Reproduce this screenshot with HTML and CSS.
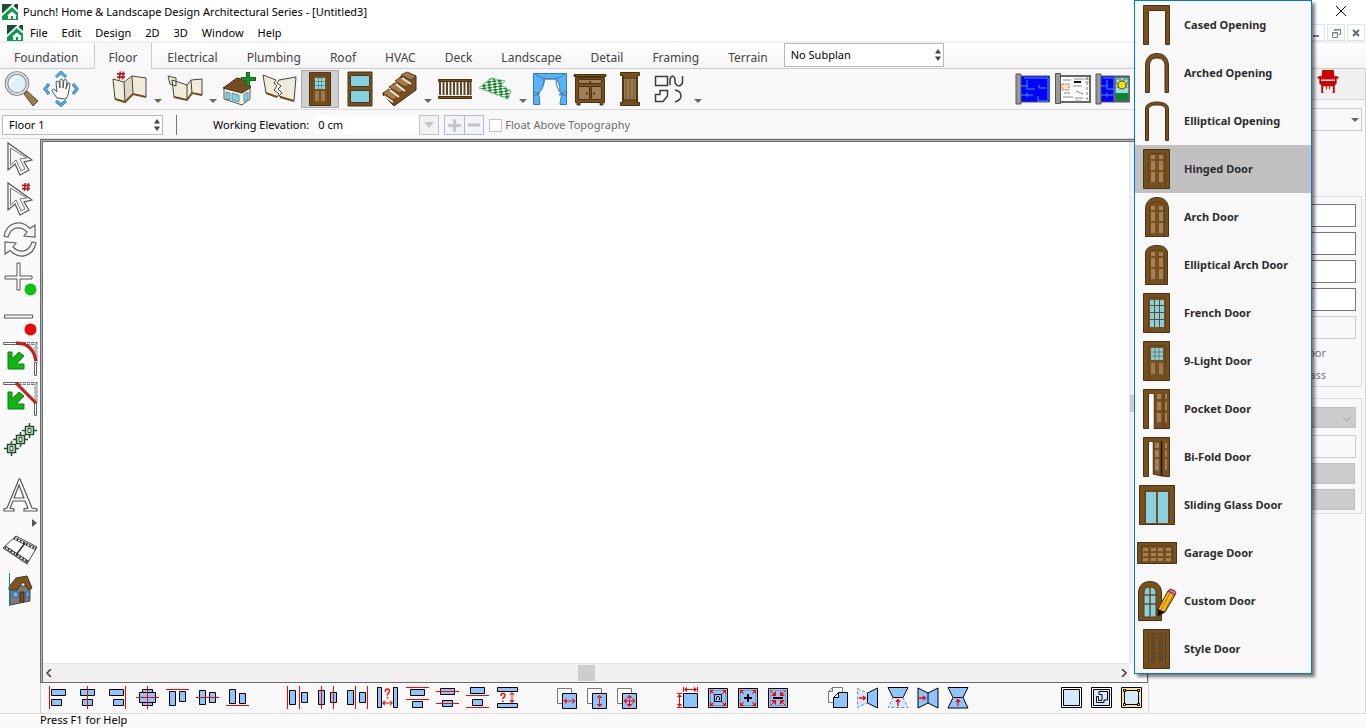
FILE: index.html
```html
<!DOCTYPE html>
<html lang="en">
<head>
<meta charset="utf-8">
<title>Punch! Home &amp; Landscape Design Architectural Series - [Untitled3]</title>
<link rel="stylesheet" href="styles.css">
</head>
<body>
<svg class="defs" width="0" height="0" aria-hidden="true">
  <defs>
    <symbol id="logo" viewBox="0 0 16 16"><path d="M0 0H16V16H0Z" fill="#0a9a4c"/><path d="M0 0H10L0 9Z" fill="#174f30"/><path d="M13 0H16V5L12 2Z" fill="#174f30"/><path d="M-1 12L13 -1M10 2L17 8.500" stroke="#fff" stroke-width="1.800"/><path d="M6 15V11.500H5L10 7.500L15 11.500H14V15H11V12H9V15Z" fill="#fff"/></symbol>
    <symbol id="updown" viewBox="0 0 8 14"><path d="M4 1L7 5.500H1ZM4 13L1 8.500H7Z" fill="#444"/></symbol>
    <symbol id="frame" viewBox="0 0 40 40"><path d="M6.500 .5H32.500V39.500H6.500Z" fill="#76501f" stroke="#4a3214"/><path d="M11.500 39V4.500H28.500V39" fill="none" stroke="#5e4019"/></symbol>
    <symbol id="archframe" viewBox="0 0 40 40"><path d="M8.500 39.500V12C8.500 5 13 .5 20 .5S31.500 5 31.500 12V39.500Z" fill="#76501f" stroke="#4a3214"/><path d="M12.500 39V12C12.500 7 16 4.500 20 4.500S27.500 7 27.500 12V39" fill="none" stroke="#5e4019"/></symbol>
    <symbol id="panels" viewBox="0 0 40 40"><path d="M14 6h4v4h-4ZM22 6h4v4h-4ZM14 12h4v9h-4ZM22 12h4v9h-4ZM14 23h4v10h-4ZM22 23h4v10h-4Z"/></symbol>
    <symbol id="ninelight" viewBox="0 0 40 40"><path d="M14 7H26V19H14Z" fill="#85d1df"/><path d="M18 7V19M22 7V19M14 11H26M14 15H26" stroke="#7a6a4a" stroke-width=".8"/><path d="M14 22h4v11h-4ZM22 22h4v11h-4Z" fill="#9c7a50"/></symbol>
    <symbol id="cursor" viewBox="0 0 40 40"><path d="M8 4V31L15 25L20 36L29 31L24 23L32 21Z" fill="#fff" stroke="#555" stroke-width="1.200"/><path d="M10.500 9V26L16 21L21 32L25 30L20 20L27 19Z" fill="#f4f4f4" stroke="#777"/></symbol>
    <symbol id="trim" viewBox="0 0 40 40"><path d="M3.500 3.500H18.500V5.500H3.500ZM34.500 23.500H36.500V36.500H34.500Z" fill="#fff" stroke="#666"/><path d="M19 4.500H36V24" fill="none" stroke="#777" stroke-width="3" stroke-dasharray="3 1"/><path d="M19.500 4.500H36V24" fill="none" stroke="#fff" stroke-dasharray="2 2"/><path d="M8 13H12V20L19 13L24 17L16 25H24V30H8Z" fill="#10b512" stroke="#07830c"/></symbol>
    <symbol id="hash" viewBox="0 0 10 10"><path d="M4 0L3 10M8 0L7 10M0 3H10M0 7H10" stroke="#b42020" stroke-width="2"/></symbol>
    <symbol id="more" viewBox="0 0 8 5"><path d="M0 0H8L4 4Z" fill="#666"/></symbol>
    <symbol id="harrow" viewBox="0 0 12 6"><path d="M0 3L3 0V6ZM12 3L9 0V6ZM2 2.500H10V3.500H2Z" fill="#f00"/></symbol>
    <symbol id="varrow" viewBox="0 0 6 12"><path d="M3 0L0 3H6ZM3 12L0 9H6ZM2.500 2H3.500V10H2.500Z" fill="#f00"/></symbol>
    <symbol id="copyback" viewBox="0 0 24 24"><path d="M1.500 2.500H15.500V17.500H1.500Z" fill="#fff" stroke="#777"/><path d="M6.500 7.500H20.500V22.500H6.500Z" fill="#8fc5ff" stroke="#000"/></symbol>
    <symbol id="square" viewBox="0 0 24 24"><path d="M2.500 2.500H21.500V21.500H2.500Z" fill="#8fc5ff" stroke="#000"/><path d="M4.500 4.500H19.500V19.500H4.500Z" fill="none" stroke="#777" stroke-dasharray="1 1"/></symbol>
    <symbol id="corners" viewBox="0 0 24 24"><path d="M4 4H8L4 8ZM20 4V8L16 4ZM4 20V16L8 20ZM20 20H16L20 16Z" fill="#f00"/><path d="M5 5L8 8M19 5L16 8M5 19L8 16M19 19L16 16" stroke="#f00"/></symbol>
  </defs>
</svg>

<header class="titlebar">
  <svg class="logo"><use href="#logo"/></svg>
  <h1 class="title">Punch! Home &amp; Landscape Design Architectural Series - [Untitled3]</h1>
  <button class="close" aria-label="Close"><svg width="12" height="12" viewBox="0 0 12 12"><path d="M1 1L11 11M11 1L1 11" stroke="#000"/></svg></button>
</header>

<div class="menubar">
  <svg class="logo"><use href="#logo"/></svg>
  <nav class="menus">
    <button>File</button><button>Edit</button><button>Design</button><button>2D</button><button>3D</button><button>Window</button><button>Help</button>
  </nav>
  <div class="mdi">
    <button aria-label="Minimize"><svg viewBox="0 0 12 12"><path d="M3 9H9" stroke="#74818f" stroke-width="2"/></svg></button>
    <button aria-label="Restore"><svg viewBox="0 0 12 12"><path d="M4.500 4V2.500H10.500V7.500H9M2.500 5.500H7.500V10.500H2.500ZM2 6H8M4 3H11" fill="none" stroke="#74818f"/></svg></button>
    <button aria-label="Close drawing"><svg viewBox="0 0 12 12"><path d="M3 3L9 9M9 3L3 9" stroke="#5f6d7b" stroke-width="2"/></svg></button>
  </div>
</div>

<div class="tabbar">
  <div class="tabs" role="tablist">
    <button role="tab">Foundation</button><button role="tab" class="active" aria-selected="true">Floor</button><button role="tab">Electrical</button><button role="tab">Plumbing</button><button role="tab">Roof</button><button role="tab">HVAC</button><button role="tab">Deck</button><button role="tab">Landscape</button><button role="tab">Detail</button><button role="tab">Framing</button><button role="tab">Terrain</button>
  </div>
  <span class="pick subplan"><select aria-label="Subplan"><option>No Subplan</option></select><svg><use href="#updown"/></svg></span>
</div>

<div class="workspace">
  <div class="main">
    <div class="toolbar">
      <div class="group">
        <button class="tool" aria-label="Zoom"><svg viewBox="0 0 36 36"><path d="M21 23L24 20L35 30L30 35Z" fill="#9b7b52" stroke="#5c4a33"/><circle cx="14" cy="12.500" r="10.500" fill="#dfeffb" stroke="#777" stroke-width="3.500"/><circle cx="14" cy="12.500" r="10.500" fill="none" stroke="#ddd" stroke-width="1.800"/><path d="M7 14Q8 6 16 6" fill="none" stroke="#fff" stroke-width="2"/></svg></button>
        <button class="tool" aria-label="Pan"><svg viewBox="0 0 36 36"><path d="M13 6L18 1.500L23 6M13 30L18 34L23 30M6 13L2 18L6 23M30 13L34 18L30 23" fill="none" stroke="#246ba8" stroke-width="3"/><path d="M13 6L18 1.500L23 6M13 30L18 34L23 30M6 13L2 18L6 23M30 13L34 18L30 23" fill="none" stroke="#55adf2" stroke-width="1.800"/><path d="M14 27L9 20Q9 17 12 19L14 21L13 11Q14 9 16 11L17 17V9Q18 7 20 9V17L21 9Q23 7 24 10L23 18L25 12Q27 11 27 14L25 24L23 28Z" fill="#fff" stroke="#555"/></svg></button>
      </div>
      <div class="group">
        <button class="tool" aria-label="Wall"><svg viewBox="0 0 36 36"><path d="M1 8L12 11L20 5L34 7V26L21 23L13 31L3 28Z" fill="#f0ecdc" stroke="#48443c"/><path d="M13 11L20 6V23L13 30Z" fill="#dcd7c6"/><path d="M12 11L13 31M20 5L21 23" stroke="#48443c"/><path d="M3 28L13 31L21 23L34 26" fill="none" stroke="#77501f" stroke-width="2"/><use href="#hash" x="5" y="0" width="8" height="9"/></svg></button>
        <button class="drop" aria-label="Wall options"><svg><use href="#more"/></svg></button>
        <button class="tool" aria-label="Connected walls"><svg viewBox="0 0 36 36"><path d="M1 5L9 7V15L3 13ZM5 9L20 14L24 9L35 8V24L25 22L20 29L7 26Z" fill="#f0ecdc" stroke="#48443c"/><path d="M20 14V28M24 9L25 23" stroke="#48443c"/><path d="M7 26L20 29L25 22L35 24" fill="none" stroke="#77501f" stroke-width="2"/></svg></button>
        <button class="drop" aria-label="Connected wall options"><svg><use href="#more"/></svg></button>
        <button class="tool" aria-label="Room addition"><svg viewBox="0 0 36 36"><path d="M2 17L20 21L28 17V28L20 34L2 28Z" fill="#f5f0df" stroke="#59544a"/><path d="M1 17L15 7L24 9L29 16L20 22Z" fill="#784c21" stroke="#44311c"/><path d="M4 21L8 22V29L4 28ZM10 22L17 24V31L10 29ZM22 23L26 21V28L22 31Z" fill="#7ed1e2" stroke="#5a98a5"/><path d="M26 1V15M19 8H34" stroke="#0f6e1b" stroke-width="4"/><path d="M26 2V14M20 8H33" stroke="#19912a" stroke-width="2"/></svg></button>
        <button class="tool" aria-label="Break wall"><svg viewBox="0 0 36 36"><path d="M1 4L14 9L12 12L15 15L12 19L17 23L15 26L4 22Z" fill="#f0ecdc" stroke="#48443c"/><path d="M17 9L34 6L32 30L17 25L20 22L16 18L19 15L15 12Z" fill="#f0ecdc" stroke="#48443c"/><path d="M4 22L15 26M18 26L32 30" stroke="#77501f" stroke-width="2"/></svg></button>
        <button class="tool selected" aria-label="Door"><svg viewBox="0 0 36 36"><path d="M7.500 1.500H28.500V34.500H7.500Z" fill="#76501f" stroke="#4a3214"/><path d="M10 34V4H26V34" fill="none" stroke="#553a17"/><path d="M13 7H23V18H13Z" fill="#85e0ee"/><path d="M16.500 7V18M19.500 7V18M13 10.500H23M13 14.500H23" stroke="#5d7a66" stroke-width=".8"/><path d="M13 20h4v10h-4ZM19 20h4v10h-4Z" fill="#9c7a50"/></svg></button>
        <button class="tool" aria-label="Window"><svg viewBox="0 0 36 36"><path d="M6 1H30V35H6Z" fill="#76501f" stroke="#4a3214"/><path d="M8.500 4.500H27.500V15.500H8.500ZM8.500 19.500H27.500V31.500H8.500Z" fill="#82d2e1" stroke="#4a3214"/></svg></button>
        <button class="tool" aria-label="Stairs"><svg viewBox="0 0 36 36"><path d="M1 24L12 35L34 19V5L26 2L18 6V11L11 13V18L1 22Z" fill="#7a4e1f" stroke="#41301d"/><path d="M1 22L7 18L17 25L11 29ZM7 16L13 12L23 19L17 22ZM13 10L19 6L29 12L23 16ZM19 4L25 1L34 5L29 9Z" fill="#a57c4c" stroke="#59401f"/><path d="M2 25L11 31M8 19L17 26M14 13L23 20M20 7L29 13" fill="none" stroke="#eee6d8" stroke-width="2"/></svg></button>
        <button class="drop" aria-label="Stair options"><svg><use href="#more"/></svg></button>
        <button class="tool" aria-label="Railing"><svg viewBox="0 0 36 36"><path d="M3 11V24M6.500 11V24M10 11V24M13.500 11V24M17 11V24M20.500 11V24M24 11V24M27.500 11V24M31 11V24M33.500 11V24" stroke="#5e4524" stroke-width="2"/><path d="M1.500 8.500H34.500V10.500H1.500ZM1.500 25.500H34.500V27.500H1.500Z" fill="#76501f" stroke="#4a3214"/></svg></button>
        <button class="tool" aria-label="Flooring"><svg viewBox="0 0 36 36"><defs><pattern id="check" width="6" height="5" patternUnits="userSpaceOnUse" patternTransform="rotate(20) skewX(-35)"><path d="M0 0H6V5H0Z" fill="#fff"/><path d="M0 0H3.200V2.700H0ZM3 2.500H6.200V5.200H3Z" fill="#0b8526"/></pattern></defs><path d="M14 7L28 10L24 14L34 20L31 28L2 17Z" fill="url(#check)" stroke="#3e9450" stroke-width=".6"/></svg></button>
        <button class="drop" aria-label="Flooring options"><svg><use href="#more"/></svg></button>
        <button class="tool" aria-label="Curtains"><svg viewBox="0 0 36 36"><path d="M1.500 2.500H34.500V33.500H28Q28 27 30 24H27Q30 15 24 8H12Q16 16 9 22H6Q8 26 8 33.500H1.500Z" fill="#57b3fc" stroke="#3d78aa"/><path d="M13 9H23Q24 17 28 21L27 24Q29 27 28 31H8Q8 27 9 24L8 21Q12 17 13 9Z" fill="#f8f8f8"/><path d="M12 8Q12 18 6 22M24 8Q24 18 30 23M3 3Q9 8 18 8T33 3M1 20L7 23L1 25M35 20L29 23L35 25" fill="none" stroke="#3d78aa"/></svg></button>
        <button class="tool" aria-label="Cabinet"><svg viewBox="0 0 36 36"><path d="M3.500 6.500H32.500V31.500H31V34H28V31.500H8V34H5V31.500H3.500Z" fill="#76501f" stroke="#4a3214"/><path d="M2 3.500H34V5.500H2Z" fill="#76501f" stroke="#4a3214"/><path d="M6.500 8.500H29.500V12.500H6.500ZM6.500 15.500H17.500V28.500H6.500ZM19.500 15.500H29.500V28.500H19.500Z" fill="#a17e53" stroke="#4a3214"/><path d="M18 10V11.500M15 21.500V23.500M22 21.500V23.500" stroke="#291d0e" stroke-width="1.500"/></svg></button>
        <button class="tool" aria-label="Column"><svg viewBox="0 0 36 36"><path d="M11 5H25V32H11Z" fill="#9c7a50" stroke="#4a3214" stroke-width="2"/><path d="M14 6V31M18 6V31M22 6V31" stroke="#755229"/><path d="M8.500 1.500H27.500V4.500H25.500V7H11V4.500H8.500ZM8.500 34.500V31.500H11V29H25V31.500H27.500V34.500Z" fill="#76501f" stroke="#4a3214"/></svg></button>
        <button class="tool" aria-label="Shapes"><svg viewBox="0 0 36 36"><path d="M3.500 5.500H15.500V14.500H3.500ZM18 14V8Q20.500 2 23 8V12Q27 18 30.500 12V5M8 19.500H15.500V25L11 30.500H3.500V23.500H8ZM23 19Q29 20 29 25Q29 29 23 31" fill="none" stroke="#3e3e3e" stroke-width="1.500"/></svg></button>
        <button class="drop" aria-label="Shape options"><svg><use href="#more"/></svg></button>
      </div>
      <div class="group plans">
        <button class="tool" aria-label="Plan view"><svg viewBox="0 0 36 36"><path d="M5 5H34.500V31H5Z" fill="#00f" stroke="#557"/><path d="M1 3H6V33H1Z" fill="#999" stroke="#555"/><path d="M12 9V18H20M6 15H12M24 17H31M24 14V17M23 25V30H33V7H9M6 24H18M12 22V26" fill="none" stroke="#41a0f7"/></svg></button>
        <button class="tool" aria-label="Layout sheet"><svg viewBox="0 0 36 36"><path d="M5 5H35V31H5Z" fill="#fff" stroke="#666" stroke-width="2"/><path d="M0.500 2.500H5.500V32.500H0.500Z" fill="#999" stroke="#555"/><path d="M7 13H14V19H7Z" fill="#f9e2c8" stroke="#9c7b58" stroke-dasharray="2 1"/><path d="M19 11H26" stroke="#111" stroke-width="2"/><path d="M8 9H16M18 15H27M19 8H29M9 22H15M21 20L28 23M8 26H18M20 27H28M20 30H26M30 8H34M30 11H34" stroke="#888"/><path d="M32 6V30" stroke="#777" stroke-dasharray="3 2"/></svg></button>
        <button class="tool" aria-label="Split view"><svg viewBox="0 0 36 36"><path d="M5 5H34.500V31H5Z" fill="#00f" stroke="#557"/><path d="M1 3H6V33H1Z" fill="#999" stroke="#555"/><path d="M12 9V18H19M6 15H12M6 24H18M12 22V26M8 7H19V30" fill="none" stroke="#41a0f7"/><path d="M20 6H34V30H20Z" fill="#42b2ff"/><path d="M20 17H34V24H20Z" fill="#94d9f2"/><path d="M20 22H34V30H20Z" fill="#0b872b"/><circle cx="27" cy="14" r="4" fill="#ffe000" stroke="#765c00"/><path d="M27 7V9M22 9L24 11M32 9L30 11M20 15H22M32 15H34" stroke="#fd0" stroke-width="2"/><path d="M20 6H34V30H20Z" fill="none" stroke="#666" stroke-width="1.500"/></svg></button>
      </div>
    </div>

    <div class="options">
      <span class="pick floor"><select aria-label="Floor"><option>Floor 1</option></select><svg><use href="#updown"/></svg></span>
      <span class="rule"></span>
      <label for="elevation">Working Elevation:</label>
      <input id="elevation" class="elevation" value="0 cm">
      <button class="dim" aria-label="Elevation list"><svg viewBox="0 0 18 18"><path d="M4 6H14L9 12Z" fill="#c4c4c4"/></svg></button>
      <div class="steps">
        <button aria-label="Raise"><svg viewBox="0 0 18 18"><path d="M9 3V15M3 9H15" stroke="#c4c4c4" stroke-width="3"/></svg></button>
        <button aria-label="Lower"><svg viewBox="0 0 18 18"><path d="M3 9H15" stroke="#c4c4c4" stroke-width="3"/></svg></button>
      </div>
      <input type="checkbox" id="float"><label for="float" class="muted">Float Above Topography</label>
    </div>

    <div class="body">
      <div class="palette">
        <button aria-label="Select"><svg viewBox="0 0 40 40"><use href="#cursor"/></svg></button>
        <button aria-label="Select by number"><svg viewBox="0 0 40 40"><use href="#cursor"/><use href="#hash" x="22" y="4" width="8" height="8"/></svg></button>
        <button aria-label="Rotate"><svg viewBox="0 0 40 40"><path id="turn" d="M4 17C7 3 21 0 30 9.500L35 6V18L24 17L27 13C20 6 11 8 8 18Z" fill="#f6f6f6" stroke="#666" stroke-width="1.200"/><use href="#turn" transform="rotate(180 20 20.500)"/></svg></button>
        <button aria-label="Add point"><svg viewBox="0 0 40 40"><path d="M17 4H20V17H32V20H20V31H17V20H5V17H17Z" fill="#fff" stroke="#555"/><circle cx="30.500" cy="30.500" r="6" fill="#0ac30d"/></svg></button>
        <button aria-label="Remove point"><svg viewBox="0 0 40 40"><path d="M4.500 16H32.500V19H4.500Z" fill="#fff" stroke="#555"/><circle cx="30.500" cy="30.500" r="6" fill="#e80b0b"/></svg></button>
        <button aria-label="Fillet"><svg viewBox="0 0 40 40"><use href="#trim"/><path d="M16 4Q33 4 36 22" fill="none" stroke="#9a1111" stroke-width="3"/><path d="M16 4Q33 4 36 22" fill="none" stroke="#f01a1a" stroke-width="1.500"/></svg></button>
        <button aria-label="Chamfer"><svg viewBox="0 0 40 40"><use href="#trim"/><path d="M16 4L36 24" stroke="#9a1111" stroke-width="3"/><path d="M16 4L36 24" stroke="#f01a1a" stroke-width="1.500"/></svg></button>
        <button aria-label="Multiple copy"><svg viewBox="0 0 40 40"><g fill="none" stroke="#214e2c"><g id="node"><path d="M25.500 7.500H33.500V15.500H25.500Z" fill="#e6eee4" stroke-width="1.500"/><path d="M28 9.500H31V13.500H28Z" fill="#fff"/><path d="M29.500 4V8M29.500 15V19M22 11.500H26M33 11.500H37" stroke-width="1.500"/></g><use href="#node" x="-9" y="9"/><use href="#node" x="-18" y="18"/></g></svg></button>
        <button class="text" aria-label="Text"><svg viewBox="0 0 40 40"><path d="M20 4L32 33L37 34V36H24V34L28 33L25 26H13L10 33L14 34V36H4V34L7 33L19 4ZM14 23H24L19 10Z" fill="#fff" fill-rule="evenodd" stroke="#555" stroke-width="1.200"/></svg></button>
        <button class="side" aria-label="More text tools"><svg viewBox="0 0 5 8"><path d="M0 0V8L5 4Z" fill="#555"/></svg></button>
        <button aria-label="Animation"><svg viewBox="0 0 40 40"><path d="M16 6L37 17L27 34L3 18Z" fill="#fff" stroke="#444"/><path d="M14 8L36 19M5 17L28 32" stroke="#333" stroke-width="3"/><path d="M15 8.500L35 18.500M6 18L27 31.500" stroke="#fff" stroke-width="1.500" stroke-dasharray="2 1.500"/><path d="M25 13L16 25" stroke="#333" stroke-width="1.500"/></svg></button>
        <button aria-label="House elevation"><svg viewBox="0 0 40 40"><path d="M10 16H30V31L10 35Z" fill="#7a7a7a" stroke="#444"/><path d="M9 17L16 8L27 6L32 18L29 20L23 12L17 20H9Z" fill="#815321" stroke="#493018"/><path d="M13 22H18V27H13ZM26 22H29V27H26Z" fill="#66baff" stroke="#29699d"/><path d="M20 22H24V32H20Z" fill="#7b4a1c" stroke="#452b13"/><path d="M9.500 3V36" stroke="#1778cc"/></svg></button>
      </div>

      <div class="center">
        <div class="viewport">
          <div class="sheet"></div>
          <div class="vscroll"><span class="vthumb"></span></div>
          <div class="hscroll">
            <button aria-label="Scroll left"><svg viewBox="0 0 8 8"><path d="M6 0L2 4L6 8" fill="none" stroke="#444" stroke-width="1.600"/></svg></button>
            <span class="hthumb"></span>
            <button aria-label="Scroll right"><svg viewBox="0 0 8 8"><path d="M2 0L6 4L2 8" fill="none" stroke="#444" stroke-width="1.600"/></svg></button>
          </div>
        </div>
        <div class="arrange">
          <div class="set">
            <button aria-label="Align left"><svg viewBox="0 0 24 24"><path class="b" d="M5.500 3.500h14v6h-14ZM5.500 13.500h10v6h-10Z"/><path class="r" d="M3.500 0V23"/></svg></button>
            <button aria-label="Align centers"><svg viewBox="0 0 24 24"><path class="b" d="M4.500 3.500h14v6h-14ZM6.500 13.500h10v6h-10Z"/><path class="r" d="M11.500 0V23"/></svg></button>
            <button aria-label="Align right"><svg viewBox="0 0 24 24"><path class="b" d="M3.500 3.500h14v6h-14ZM7.500 13.500h10v6h-10Z"/><path class="r" d="M19.500 0V23"/></svg></button>
            <button aria-label="Center both"><svg viewBox="0 0 24 24"><path class="b" d="M6.500 3.500h10v16h-10Z"/><path class="b" d="M3.500 6.500h16v10h-16Z"/><path class="r" d="M11.500 0V23M0 11.500H23"/></svg></button>
            <button aria-label="Align tops"><svg viewBox="0 0 24 24"><path class="b" d="M3.500 5.500h6v14h-6ZM13.500 5.500h6v10h-6Z"/><path class="r" d="M0 3.500H23"/></svg></button>
            <button aria-label="Align middles"><svg viewBox="0 0 24 24"><path class="b" d="M3.500 4.500h6v14h-6ZM13.500 6.500h6v10h-6Z"/><path class="r" d="M0 11.500H23"/></svg></button>
            <button aria-label="Align bottoms"><svg viewBox="0 0 24 24"><path class="b" d="M3.500 3.500h6v14h-6ZM13.500 7.500h6v10h-6Z"/><path class="r" d="M0 19.500H23"/></svg></button>
          </div>
          <div class="set">
            <button aria-label="Distribute left edges"><svg viewBox="0 0 24 24"><path class="b" d="M3.500 4.500h6v14h-6ZM15.500 6.500h6v10h-6Z"/><path class="r" d="M1.500 0V23M13.500 0V23"/></svg></button>
            <button aria-label="Distribute centers"><svg viewBox="0 0 24 24"><path class="b" d="M2.500 4.500h6v14h-6ZM14.500 6.500h6v10h-6Z"/><path class="r" d="M5.500 0V23M17.500 0V23"/></svg></button>
            <button aria-label="Distribute right edges"><svg viewBox="0 0 24 24"><path class="b" d="M1.500 4.500h6v14h-6ZM13.500 6.500h6v10h-6Z"/><path class="r" d="M9.500 0V23M21.500 0V23"/></svg></button>
            <button aria-label="Space horizontally"><svg viewBox="0 0 24 24"><path class="b" d="M1.500 1.500h4v20h-4ZM17.500 1.500h4v20h-4Z"/><path class="q" d="M9.500 6V4.500Q9.500 3 11.500 3T13.500 5Q13.500 6.500 11.500 8V9.500M11.500 11V12.500"/><use href="#harrow" x="6" y="14" width="11" height="6"/></svg></button>
            <button aria-label="Distribute top edges"><svg viewBox="0 0 24 24"><path class="b" d="M4.500 3.500h14v6h-14ZM6.500 15.500h10v6h-10Z"/><path class="r" d="M0 1.500H23M0 13.500H23"/></svg></button>
            <button aria-label="Distribute middles"><svg viewBox="0 0 24 24"><path class="b" d="M4.500 2.500h14v6h-14ZM6.500 14.500h10v6h-10Z"/><path class="r" d="M0 5.500H23M0 17.500H23"/></svg></button>
            <button aria-label="Distribute bottom edges"><svg viewBox="0 0 24 24"><path class="b" d="M4.500 1.500h14v6h-14ZM6.500 13.500h10v6h-10Z"/><path class="r" d="M0 9.500H23M0 21.500H23"/></svg></button>
            <button aria-label="Space vertically"><svg viewBox="0 0 24 24"><path class="b" d="M1.500 1.500h20v4h-20ZM1.500 17.500h20v4h-20Z"/><path class="q" d="M5 10V9Q5 7.500 7 7.500T9 9.500Q9 11 7 12V13M7 14.500V16"/><use href="#varrow" x="13" y="6" width="6" height="11"/></svg></button>
          </div>
          <div class="set">
            <button aria-label="Match width"><svg viewBox="0 0 24 24"><use href="#copyback"/><use href="#harrow" x="7.500" y="12" width="12" height="6"/></svg></button>
            <button aria-label="Match height"><svg viewBox="0 0 24 24"><use href="#copyback"/><use href="#varrow" x="10.500" y="8" width="6" height="14"/></svg></button>
            <button aria-label="Match size"><svg viewBox="0 0 24 24"><use href="#copyback"/><use href="#harrow" x="7.500" y="12" width="12" height="6"/><use href="#varrow" x="10.500" y="9" width="6" height="12"/></svg></button>
          </div>
          <div class="set">
            <button aria-label="Dimensions"><svg viewBox="0 0 24 24"><path class="b" d="M7.500 7.500h14v14h-14Z"/><path class="r" d="M9 3.500H20M7.500 1V6M21.500 1V6M3.500 9V20M1 7.500H6M1 21.500H6"/><path d="M8 3.500L11 1V6ZM21 3.500L18 1V6ZM3.500 8L1 11H6ZM3.500 21L1 18H6Z" fill="#f00"/></svg></button>
            <button aria-label="Scale"><svg viewBox="0 0 24 24"><use href="#square"/><use href="#corners"/><path d="M8.500 8.500h7v7h-7ZM10.500 14V11.500L12 10L13.500 11.500V14" fill="#8fc5ff" stroke="#000"/></svg></button>
            <button aria-label="Enlarge"><svg viewBox="0 0 24 24"><use href="#square"/><use href="#corners"/><path d="M12 8V16M8 12H16" stroke="#000" stroke-width="2"/></svg></button>
            <button aria-label="Reduce"><svg viewBox="0 0 24 24"><use href="#square"/><path d="M10 10V5L5 10ZM14 10V5L19 10ZM10 14V19L5 14ZM14 14V19L19 14Z" fill="#f00"/><path d="M4 4L9 9M20 4L15 9M4 20L9 15M20 20L15 15" stroke="#f00"/><path d="M7 12H17" stroke="#000" stroke-width="2"/></svg></button>
          </div>
          <div class="set">
            <button aria-label="Duplicate"><svg viewBox="0 0 24 24"><path d="M6.500 1.500H16.500V16.500H2.500V5.500ZM2.500 5.500H6.500V1.500" fill="#fff" stroke="#777"/><path class="b" d="M12.500 6.500H21.500V21.500H7.500V11.500ZM7.500 11.500H12.500V6.500"/></svg></button>
            <button aria-label="Mirror copy horizontally"><svg viewBox="0 0 24 24"><path class="ghost" d="M1.500 2.500L11.500 7V17L1.500 21.500Z"/><path class="b" d="M21.500 2L11.500 7V17L21.500 22Z"/><path d="M3 12H9M7 10L9.500 12L7 14" stroke="#f00" stroke-width="1.300" fill="none"/></svg></button>
            <button aria-label="Mirror copy vertically"><svg viewBox="0 0 24 24"><path class="ghost" d="M7 11.500H17L22 21.500H2Z"/><path class="b" d="M2 1.500H22L17 11.500H7Z"/><path d="M12 20V14M10 16L12 13.500L14 16" stroke="#f00" stroke-width="1.300" fill="none"/></svg></button>
            <button aria-label="Flip horizontally"><svg viewBox="0 0 24 24"><path class="b" d="M2 2L12 7L22 2V22L12 17L2 22ZM12 7V17"/><path d="M3 12H9M7 10L9.500 12L7 14" stroke="#f00" stroke-width="1.300" fill="none"/></svg></button>
            <button aria-label="Flip vertically"><svg viewBox="0 0 24 24"><path class="b" d="M2 1.500H22L17 11.500L22 22H2L7 11.500ZM7 11.500H17"/><path d="M12 20V14M10 16L12 13.500L14 16" stroke="#f00" stroke-width="1.300" fill="none"/></svg></button>
          </div>
          <div class="set last">
            <button aria-label="Show boundary"><svg viewBox="0 0 24 24"><path d="M2.500 1.500H22.500V21.500H2.500Z" fill="#fff" stroke="#000"/><path d="M4.500 3.500H20.500V19.500H4.500Z" fill="#d3e9ff" stroke="#000"/></svg></button>
            <button aria-label="Show outline"><svg viewBox="0 0 24 24"><path d="M2.500 1.500H22.500V21.500H2.500Z" fill="#fff" stroke="#000"/><path d="M4.500 3.500H20.500V19.500H4.500Z" fill="#d3e9ff" stroke="#000"/><path d="M10 5.500H18.500V14H15V16.500H7.500V10.500H9.500V14.500H13V8.500H10Z" fill="none" stroke="#000"/></svg></button>
            <button aria-label="Show handles"><svg viewBox="0 0 24 24"><path d="M2.500 1.500H22.500V21.500H2.500Z" fill="#ffe97a" stroke="#000"/><path d="M5.500 4.500H19.500V18.500H5.500Z" fill="#d3e9ff" stroke="#000"/><path d="M4.500 3.500h2v2h-2ZM18.500 3.500h2v2h-2ZM4.500 17.500h2v2h-2ZM18.500 17.500h2v2h-2Z" fill="#fff" stroke="#000"/></svg></button>
          </div>
        </div>
      </div>
    </div>
  </div>

  <aside class="panel">
    <div class="panelhead"><button aria-label="Furniture"><svg viewBox="0 0 24 26"><path d="M6 1H18L19 11H5ZM1 8L5 7V12H19V7L23 8V10H21V15L19 17V25H17V18H14V21H13V18H11V21H10V18H7V25H5V17L3 15V10H1Z" fill="#c90000"/><path d="M5 12H19" stroke="#f0f0f0"/></svg></button></div>
    <div class="panelbody">
      <span class="pick type"><select aria-label="Type"></select><svg><use href="#more"/></svg></span>
      <div class="box sizes">
        <input aria-label="Width"><input aria-label="Height"><input aria-label="Elevation"><input aria-label="Thickness"><input aria-label="Swing" disabled>
        <p>Door</p><p>Glass</p>
      </div>
      <div class="box style">
        <span class="pick finish"><select aria-label="Finish" disabled></select><svg viewBox="0 0 10 6"><path d="M1 1L5 5L9 1" fill="none" stroke="#999"/></svg></span>
        <input aria-label="Finish name" disabled>
        <button disabled aria-label="Edit finish"></button>
        <button disabled aria-label="Reset finish"></button>
      </div>
    </div>
  </aside>
</div>

<footer class="status">Press F1 for Help</footer>

<div class="popup" role="menu">
  <button role="menuitem"><svg viewBox="0 0 40 40"><path d="M6.500 .5H32.500V39.500H28.500V5.500H11.500V39.500H6.500Z" fill="#76501f" stroke="#4a3214"/></svg>Cased Opening</button>
  <button role="menuitem"><svg viewBox="0 0 40 40"><path d="M8.500 39.500V13C8.500 5 13 .5 20 .5S31.500 5 31.500 13V39.500H28V13C28 8 25 5 20 5S12.500 8 12.500 13V39.500Z" fill="#76501f" stroke="#4a3214"/></svg>Arched Opening</button>
  <button role="menuitem"><svg viewBox="0 0 40 40"><path d="M8.500 39.500V8C8.500 3 14 1 20 1S31.500 3 31.500 8V39.500H28.500V9C28.500 5 25 4 20 4S11.500 5 11.500 9V39.500Z" fill="#76501f" stroke="#4a3214"/></svg>Elliptical Opening</button>
  <button role="menuitem" class="current"><svg viewBox="0 0 40 40"><use href="#frame"/><use href="#panels" fill="#a58158"/></svg>Hinged Door</button>
  <button role="menuitem"><svg viewBox="0 0 40 40"><use href="#archframe"/><use href="#panels" y="3" fill="#a58158"/></svg>Arch Door</button>
  <button role="menuitem"><svg viewBox="0 0 40 40"><path d="M8.500 39.500V8C8.500 3 14 .5 20 .5S30.500 3 30.500 8V39.500Z" fill="#76501f" stroke="#4a3214"/><path d="M12.500 39V9C12.500 6 16 4.500 20 4.500S27.500 6 27.500 9V39" fill="none" stroke="#5e4019"/><use href="#panels" y="1" fill="#a58158"/></svg>Elliptical Arch Door</button>
  <button role="menuitem"><svg viewBox="0 0 40 40"><use href="#frame"/><path d="M13 7H27V34H13Z" fill="#85d1df"/><path d="M17.500 7V34M22.500 7V34M13 12.500H27M13 19.500H27M13 26.500H27" stroke="#684a22"/></svg>French Door</button>
  <button role="menuitem"><svg viewBox="0 0 40 40"><use href="#frame"/><use href="#ninelight"/></svg>9-Light Door</button>
  <button role="menuitem"><svg viewBox="0 0 40 40"><path d="M6.500 .5H32.500V39.500H17V5H11.500V39.500H6.500Z" fill="#76501f" stroke="#4a3214"/><path d="M12 5H16.500V39H12Z" fill="#fff"/><path d="M20 5h4v5h-4ZM28 5h2v5h-2ZM20 13h4v8h-4ZM28 13h2v8h-2ZM20 24h4v9h-4ZM28 24h2v9h-2Z" fill="#a58158"/><path d="M26.500 4V39" stroke="#5e4019"/></svg>Pocket Door</button>
  <button role="menuitem"><svg viewBox="0 0 40 40"><path d="M6.500 .5H32.500V39.500H30L24.500 39L16 37V5H11.500V39.500H6.500Z" fill="#76501f" stroke="#4a3214"/><path d="M12 5H15.500V39H12Z" fill="#fff"/><path d="M18 6h4v5h-4ZM18 13h4v7h-4ZM18 22h4v12l-4-1ZM28 6h2v5h-2ZM28 13h2v7h-2ZM28 22h2v11h-2Z" fill="#a58158"/><path d="M24.500 4V39" stroke="#1f1407" stroke-width="1.500"/></svg>Bi-Fold Door</button>
  <button role="menuitem"><svg viewBox="0 0 40 40"><path d="M2.500 .5H37.500V39.500H2.500Z" fill="#76501f" stroke="#4a3214"/><path d="M8 38V6H32V38" fill="none" stroke="#553a17"/><path d="M9 7H19V38H9ZM21 7H31V38H21Z" fill="#87d1e2"/></svg>Sliding Glass Door</button>
  <button role="menuitem"><svg viewBox="0 0 40 40"><path d="M.5 9.500H39.500V30.500H.5Z" fill="#76501f" stroke="#4a3214"/><path d="M4.500 30V12.500H35.500V30" fill="none" stroke="#5e4019"/><path id="slats" d="M6 15h5v3h-5ZM14 15h5v3h-5ZM21 15h5v3h-5ZM29 15h5v3h-5Z" fill="#a58158"/><use href="#slats" y="5"/><use href="#slats" y="10"/></svg>Garage Door</button>
  <button role="menuitem"><svg viewBox="0 0 40 40"><path d="M1.500 39.500V12C1.500 5 6 .5 13 .5S24.500 5 24.500 12V39.500Z" fill="#76501f" stroke="#4a3214"/><path d="M7 36V12Q7 6 13 6T19 12V36Z" fill="#85d1df" stroke="#553a17"/><path d="M13 6V36M7 14H19M7 23H19" stroke="#684a22" stroke-width="1.500"/><path d="M21 28L31 10L38 14L28 31L21 35Z" fill="#ffb719" stroke="#332307"/><path d="M24 29L33 12M27 31L36 14" stroke="#ad6e00"/><path d="M21 28L28 31L21 35Z" fill="#111"/><path d="M31 10L33 8Q39 9 39 12L38 14Z" fill="#db6894" stroke="#842d50"/></svg>Custom Door</button>
  <button role="menuitem"><svg viewBox="0 0 40 40"><use href="#frame"/><use href="#panels" fill="#5c4630"/></svg>Style Door</button>
</div>
</body>
</html>
```
FILE: styles.css
```css
* { box-sizing: border-box; }

body {
  margin: 0;
  height: 100vh;
  display: flex;
  flex-direction: column;
  overflow: hidden;
  background: #fafafa;
  color: #000;
  font: 11px/16px "Noto Sans", "Open Sans", sans-serif;
}

button, input, select {
  margin: 0;
  padding: 0;
  border: 0;
  border-radius: 0;
  background: none;
  color: inherit;
  font: inherit;
}

svg { display: block; flex: none; }
.defs { position: absolute; }
.logo { width: 16px; height: 16px; }

/* Title and menus */
.titlebar { display: flex; align-items: center; gap: 5px; height: 24px; padding: 0 19px 0 2px; background: #fff; }
.title { margin: 0; font-size: 11px; font-weight: 400; }
.close { margin-left: auto; margin-bottom: 3px; }
.menubar { display: flex; align-items: center; height: 19px; padding: 0 1px 0 7px; background: #fff; border-bottom: 2px solid #f0f0f0; }
.menus { display: flex; }
.menus button { padding: 0 7px; }
.mdi { display: flex; gap: 2px; margin-left: auto; }
.mdi button { width: 18px; height: 17px; padding: 2px; border: 1px solid #e3e3e3; }
.mdi svg { width: 12px; height: 12px; }

/* Tabs */
.tabbar { display: flex; height: 26px; background: linear-gradient(#fff, #f4f4f4); border-bottom: 1px solid #ccc; }
.tabs { display: flex; gap: 1px; margin-bottom: -1px; }
.tabs button { padding: 3px 14px 0; color: #444; font-size: 12px; }
.tabs .active { background: #f8f8f8; border: solid #ccc; border-width: 0 1px; }

.pick { position: relative; display: block; }
.pick select { width: 100%; height: 100%; appearance: none; background: #fff; border: 1px solid #b9b9b9; padding: 0 6px; opacity: 1; }
.pick svg { position: absolute; right: 2px; top: 50%; width: 8px; height: 14px; margin-top: -7px; pointer-events: none; }
.subplan { width: 160px; height: 24px; margin-left: 2px; }

/* Work area */
.workspace { display: flex; flex: 1; min-height: 0; border-bottom: 1px solid #dcdcdc; }
.main { display: flex; flex-direction: column; flex: 1; min-width: 0; }
.toolbar { display: flex; height: 41px; padding: 0 15px 0 1px; background: #f8f8f8; border-bottom: 1px solid #dcdcdc; gap: 29px; }
.group { display: flex; align-items: center; }
.plans { margin-left: auto; }
.tool { display: grid; place-items: center; width: 40px; height: 40px; }
.tool svg { width: 36px; height: 36px; }
.selected { background: #cfcfcf; border: 1px solid #aaa; height: 38px; width: 38px; margin: 0 1px; }
.drop { width: 15px; height: 40px; padding: 25px 0 0 4px; }
.drop svg { width: 8px; height: 5px; }

.options { display: flex; align-items: center; height: 29px; background: #f8f8f8; padding: 2px 0 0 2px; border-bottom: 1px solid #dcdcdc; }
.floor { width: 161px; height: 20px; }
.rule { width: 1px; height: 20px; margin: 0 36px 0 13px; background: #777; }
.elevation { width: 104px; height: 20px; margin-left: 6px; padding: 0 3px 2px; background: #fff; }
.dim { width: 20px; height: 20px; border: 1px solid #c4c4c4; background: #f2f2f2; }
.steps { display: flex; margin: 0 5px; border: 1px solid #b7bcc5; }
.steps button { width: 19px; height: 18px; background: #f1f4fb; }
.steps button + button { border-left: 1px solid #b7bcc5; }
.options input[type="checkbox"] { width: 13px; height: 13px; margin-right: 3px; appearance: none; background: #fff; border: 1px solid #c4c4c4; }
.muted { color: #6d6d6d; }

.body { display: flex; flex: 1; min-height: 0; }
.palette { display: flex; flex-direction: column; width: 40px; background: #fafafa; }
.palette button { height: 40px; width: 40px; }
.palette .text { margin-top: 16px; }
.palette .side { height: 15px; padding: 0 0 0 32px; }
.side svg { width: 5px; height: 8px; }

.center { display: flex; flex-direction: column; flex: 1; min-width: 0; }
.viewport { flex: 1; display: grid; grid-template: 1fr 18px / 1fr 17px; background: #b5b5b5; border: 3px double #6b6b6b; border-right: 1px solid #6b6b6b; border-bottom: 1px solid #6b6b6b; min-height: 0; }
.viewport::after { content: ""; background: #fff; }
.sheet { background: #fff; border: solid #e3e3e3; border-width: 0 1px 1px 0; }
.vscroll { background: #f0f0f0; display: grid; align-items: center; }
.vthumb { height: 17px; background: #cdcdcd; }
.hscroll { display: flex; align-items: center; justify-content: space-between; background: #f0f0f0; padding: 0 2px; }
.hscroll svg { width: 8px; height: 8px; }
.hthumb { width: 17px; height: 16px; background: #cdcdcd; }

.arrange { display: flex; gap: 30px; height: 30px; padding-left: 2px; background: #f8f8f8; border-left: 1px solid #ccc; }
.set { display: flex; }
.set button { display: grid; place-items: center; width: 30px; height: 30px; }
.set svg { width: 24px; height: 24px; }
.last { margin-left: auto; padding-right: 2px; }
.b { fill: #8fc5ff; stroke: #000; }
.r { fill: none; stroke: #f00; }
.q { fill: none; stroke: #f00; stroke-width: 1.4; }
.ghost { fill: #d3e9ff; stroke: #888; stroke-dasharray: 3 2; }

/* Properties */
.panel { width: 218px; background: #f8f8f8; border: solid #d5d5d5; border-width: 0 1px; }
.panelhead { height: 31px; padding: 0 25px 5px; background: #f0f0f0; border-bottom: 1px solid #d5d5d5; display: flex; justify-content: flex-end; }
.panelhead svg { width: 24px; height: 25px; }
.panelbody { padding: 8px 3px 0; }
.type { height: 23px; }
.type select { background: #f8f8f8; border-color: #ccc; }
.type svg { height: 5px; margin-top: -2px; right: 3px; }
.box { display: flex; flex-direction: column; align-items: flex-end; gap: 5px; padding: 7px 5px 3px; border: 1px solid #dcdcdc; }
.sizes { margin-top: 65px; }
.box input { width: 160px; height: 23px; background: #fff; border: 1px solid #777; }
.box input:disabled { background: #f8f8f8; border-color: #ccc; }
.box p { margin: 0 30px 0 0; line-height: 17px; color: #777; }
.style { margin-top: 11px; padding: 8px 5px 3px; }
.finish { width: 160px; height: 21px; margin-bottom: 2px; }
.finish select { background: #ccc; border-color: #c0c0c0; }
.finish svg { width: 10px; height: 6px; margin-top: -2px; right: 4px; }
.box button { width: 159px; height: 21px; margin-right: 1px; background: #ccc; border: 1px solid #bfbfbf; }

.status { height: 14px; padding-left: 40px; line-height: 12px; background: #fafafa; }

/* Door menu */
.popup { position: absolute; top: 0; right: 54px; width: 178px; background: #f8f8f8; border: 1px solid #0078d7; box-shadow: 3px 3px 3px rgba(0, 0, 0, .5); }
.popup button { display: flex; align-items: center; gap: 7px; width: 100%; height: 48px; padding-left: 2px; color: #2d2d2d; font-weight: 700; text-align: left; }
.popup svg { width: 40px; height: 40px; }
.popup .current { background: #c1c1c1; }
```
